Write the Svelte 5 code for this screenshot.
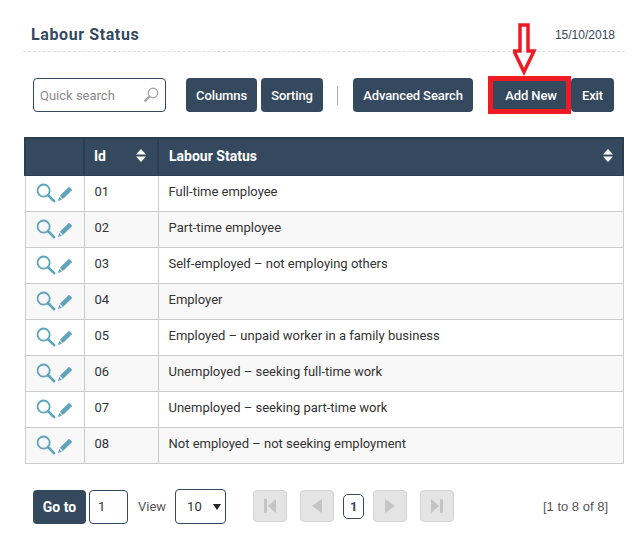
<script>
	const rows = [
		['01', 'Full-time employee'],
		['02', 'Part-time employee'],
		['03', 'Self-employed – not employing others'],
		['04', 'Employer'],
		['05', 'Employed – unpaid worker in a family business'],
		['06', 'Unemployed – seeking full-time work'],
		['07', 'Unemployed – seeking part-time work'],
		['08', 'Not employed – not seeking employment']
	];
</script>

{#snippet sortIcon()}
	<svg class="sort" width="10" height="13" viewBox="0 0 10 13"><path d="M5 0 10 5.5H0zM0 7.5H10L5 13z" fill="#fff" /></svg>
{/snippet}

<div class="page">
	<header class="head">
		<h1>Labour Status</h1>
		<span class="date">15/10/2018</span>
	</header>

	<div class="toolbar">
		<div class="search">
			<span class="placeholder">Quick search</span>
			<svg width="16" height="16" viewBox="0 0 16 16" fill="none" stroke="#a9a9a9">
				<circle cx="10" cy="6" r="4.7" stroke-width="1.5" />
				<path d="M6.4 9.6 1.6 14.6" stroke-width="2.4" />
			</svg>
		</div>
		<button class="btn columns">Columns</button>
		<button class="btn sorting">Sorting</button>
		<span class="sep"></span>
		<button class="btn advanced">Advanced Search</button>
		<div class="addwrap">
			<button class="btn add">Add New</button>
			<span class="redbox"></span>
			<svg class="arrow" width="24" height="53" viewBox="0 0 24 53" fill="none" stroke="#ed1c24" stroke-width="3.5">
				<path d="M7 2H15V28H21L11 49 1 28H7Z" />
			</svg>
		</div>
		<button class="btn exit">Exit</button>
	</div>

	<table>
		<thead>
			<tr>
				<th class="c1"></th>
				<th class="c2"><div class="th">Id {@render sortIcon()}</div></th>
				<th class="c3"><div class="th">Labour Status {@render sortIcon()}</div></th>
			</tr>
		</thead>
		<tbody>
			{#each rows as [id, name]}
				<tr>
					<td class="actions">
						<div class="icons">
							<svg width="20" height="20" viewBox="0 0 21 21" fill="none" stroke="#5fa3bd">
								<circle cx="8" cy="8" r="6.4" stroke-width="1.9" />
								<path d="M12.8 12.8 19 19" stroke-width="2.8" stroke-linecap="round" />
							</svg>
							<svg width="15" height="15" viewBox="0 0 15 15" fill="#5fa3bd">
								<path d="M11 .8 14.2 4 5 13 1.8 9.8zM1.2 11 3.9 13.7 0 14.9z" />
							</svg>
						</div>
					</td>
					<td class="idcell">{id}</td>
					<td class="namecell">{name}</td>
				</tr>
			{/each}
		</tbody>
	</table>

	<footer class="pager">
		<button class="btn goto">Go to</button>
		<span class="field pageinput">1</span>
		<span class="viewlabel">View</span>
		<span class="field select">10 <i></i></span>
		<button class="nav first" aria-label="First">
			<svg width="12" height="14" viewBox="0 0 12 14" fill="#c4c4c4"><path d="M0 0H3V14H0zM12 0V14L4 7z" /></svg>
		</button>
		<button class="nav prev" aria-label="Previous">
			<svg width="10" height="14" viewBox="0 0 10 14" fill="#c4c4c4"><path d="M10 0V14L0 7z" /></svg>
		</button>
		<span class="current">1</span>
		<button class="nav next" aria-label="Next">
			<svg width="10" height="14" viewBox="0 0 10 14" fill="#c4c4c4"><path d="M0 0V14L10 7z" /></svg>
		</button>
		<button class="nav last" aria-label="Last">
			<svg width="12" height="14" viewBox="0 0 12 14" fill="#c4c4c4"><path d="M12 0H9V14H12zM0 0V14L8 7z" /></svg>
		</button>
		<span class="count">[1 to 8 of 8]</span>
	</footer>
</div>

<style>
	:global(body) {
		background: #fff;
	}
	.page {
		width: 644px;
		height: 541px;
		box-sizing: border-box;
		padding: 0 19px 0 23px;
		font-family: Roboto, 'Liberation Sans', sans-serif;
		font-size: 13px;
		color: #333;
		overflow: hidden;
	}
	.head {
		height: 52px;
		box-sizing: border-box;
		padding: 25px 10px 0 8px;
		display: flex;
		justify-content: space-between;
		border-bottom: 1px dashed #ddd;
	}
	h1 {
		margin: 0;
		font-size: 16px;
		line-height: 20px;
		font-weight: 700;
		letter-spacing: 0.6px;
		color: #34495e;
	}
	.date {
		font-family: 'Liberation Sans', sans-serif;
		font-size: 12px;
		line-height: 20px;
		color: #34495e;
	}
	.toolbar {
		display: flex;
		align-items: center;
		height: 34px;
		margin: 26px 0 25px 10px;
	}
	.search {
		width: 133px;
		height: 34px;
		box-sizing: border-box;
		border: 1px solid #34495e;
		border-radius: 4px;
		display: flex;
		align-items: center;
		justify-content: space-between;
		padding: 0 6px;
		margin-right: 20px;
	}
	.placeholder {
		color: #8a8a8a;
		font-size: 13px;
	}
	.btn {
		height: 34px;
		padding: 0;
		border: 0;
		border-radius: 4px;
		background: #34495e;
		color: #fff;
		font: 500 13px Roboto, sans-serif;
		letter-spacing: -0.1px;
	}
	.columns {
		width: 71px;
		margin-right: 4px;
	}
	.sorting {
		width: 62px;
	}
	.sep {
		width: 1px;
		height: 19px;
		background: #aaa;
		margin: 0 15px 0 14px;
	}
	.advanced {
		width: 120px;
	}
	.addwrap {
		position: relative;
		margin-left: 20px;
		width: 78px;
		height: 34px;
	}
	.add {
		width: 78px;
		padding-right: 2px;
		display: block;
	}
	.redbox {
		position: absolute;
		left: -5px;
		top: -2px;
		width: 83px;
		height: 38px;
		box-sizing: border-box;
		border: 5px solid #ed1c24;
	}
	.arrow {
		position: absolute;
		left: 20px;
		top: -55px;
	}
	.exit {
		width: 43px;
	}
	table {
		width: 600px;
		margin-left: 1px;
		border-collapse: collapse;
		table-layout: fixed;
	}
	th {
		height: 37px;
		box-sizing: border-box;
		background: #34495e;
		border: 2px solid #2b3d50;
		border-width: 2px 2px 1px;
		color: #fff;
		font-size: 14px;
		font-weight: 700;
		text-align: left;
		padding: 0 9px 2px;
	}
	.c1 {
		width: 59px;
	}
	.c2 {
		width: 74px;
		padding-right: 11px;
	}
	.c3 {
		padding-left: 10px;
	}
	.th {
		display: flex;
		justify-content: space-between;
		align-items: center;
	}
	td {
		height: 36px;
		box-sizing: border-box;
		padding: 0 9px 4px;
		border: 1px solid #ccc;
		font-size: 13px;
		color: #333;
	}
	tbody tr:nth-child(even) td {
		background: #f8f8f8;
	}
	.actions {
		padding: 0 0 0 10px;
	}
	.idcell,
	.namecell {
		padding-left: 10px;
	}
	.icons {
		display: flex;
		align-items: center;
		gap: 2px;
	}
	.pager {
		display: flex;
		align-items: center;
		height: 36px;
		margin: 25px 0 0 10px;
	}
	.goto {
		width: 53px;
		margin-right: 3px;
		font-weight: 700;
		font-size: 14px;
		letter-spacing: 0;
	}
	.field {
		box-sizing: border-box;
		border: 1px solid #34495e;
		border-radius: 4px;
		display: flex;
		align-items: center;
		height: 34px;
		font-size: 13px;
	}
	.pageinput {
		width: 39px;
		padding-left: 8px;
	}
	.viewlabel {
		margin: 0 9px 0 10px;
		color: #555;
		font-size: 13px;
	}
	.select {
		width: 51px;
		height: 35px;
		padding-left: 11px;
		justify-content: space-between;
		padding-right: 4px;
	}
	.select i {
		width: 0;
		height: 0;
		border: 4px solid transparent;
		border-top: 6px solid #222;
		border-bottom: 0;
	}
	.nav {
		width: 34px;
		height: 32px;
		padding: 0;
		margin-bottom: 2px;
		display: flex;
		align-items: center;
		justify-content: center;
		background: #e4e4e4;
		border: 1px solid #d4d4d4;
		border-radius: 4px;
	}
	.first {
		margin-left: 27px;
	}
	.prev {
		margin-left: 13px;
	}
	.current {
		width: 21px;
		height: 25px;
		box-sizing: border-box;
		border: 1px solid #34495e;
		border-radius: 5px;
		margin: 0 9px 1px;
		display: flex;
		align-items: center;
		justify-content: center;
		font-weight: 700;
		font-size: 13px;
		color: #34495e;
	}
	.last {
		margin-left: 13px;
	}
	.count {
		margin-left: auto;
		margin-right: 17px;
		font-family: 'Liberation Sans', sans-serif;
		font-size: 13px;
		color: #555;
	}
</style>
